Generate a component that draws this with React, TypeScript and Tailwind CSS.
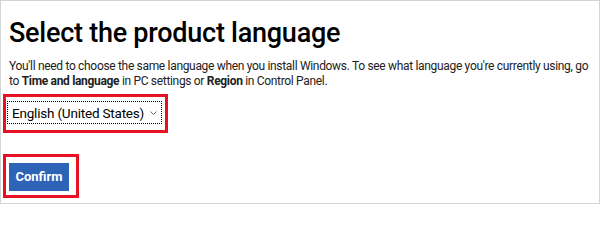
import React from "react";

export default function App() {
  return (
    <div
      className="w-[600px] h-[204px] border border-[#d4d4d4] bg-white overflow-hidden text-black"
      style={{ fontFamily: 'Roboto, "Open Sans", sans-serif' }}
    >
      <div className="pl-[8px] pt-[15px]">
        <h1 className="text-[27px] leading-[34px] font-medium whitespace-nowrap tracking-[-0.25px]">
          Select the product language
        </h1>
        <p className="mt-[9px] text-[12px] leading-[15px] tracking-[-0.32px] text-[#222] whitespace-nowrap">
          You'll need to choose the same language when you install Windows. To see what language you're currently using, go
          <br />
          to <b className="font-bold">Time and language</b> in PC settings or <b className="font-bold">Region</b> in Control Panel.
        </p>
      </div>
      <div className="ml-[2px] mt-[5px] w-[165px] h-[39px] border-[3px] border-[#e81123] pl-[1px] pt-[4px]">
        <div className="w-[155px] h-[23px] border border-dotted border-black flex items-center pl-[4px] pr-[4px]">
          <span className="text-[13.5px] leading-[20px] whitespace-nowrap tracking-[-0.2px]">English (United States)</span>
          <svg width="7" height="4" viewBox="0 0 7 4" className="ml-auto">
            <path d="M0.5 0.5 L3.5 3.5 L6.5 0.5" fill="none" stroke="#666" strokeWidth="1" />
          </svg>
        </div>
      </div>
      <div className="ml-[2px] mt-[21px] w-[76px] h-[44px] border-[3px] border-[#e81123] pl-[3px] pt-[6px]">
        <button className="w-[60px] h-[28px] bg-[#2e64b8] text-white text-[13px] font-bold flex items-center justify-center">
          Confirm
        </button>
      </div>
    </div>
  );
}
